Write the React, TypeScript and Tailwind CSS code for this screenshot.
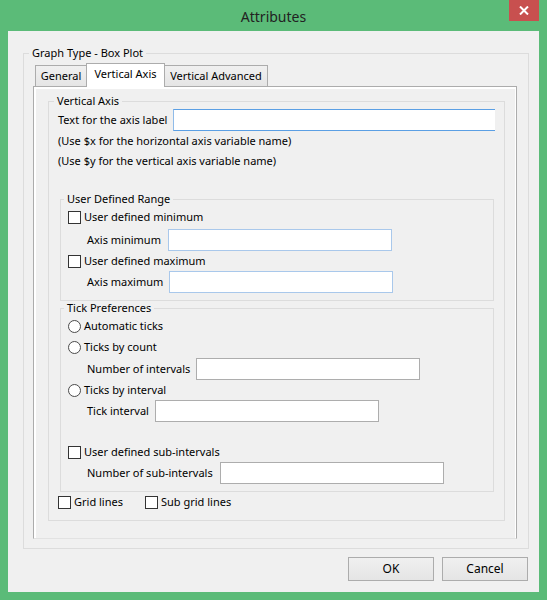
import React from 'react';

// Win8-style "Attributes" dialog, Vertical Axis tab
const font = "font-['Segoe_UI','Noto_Sans',sans-serif]";

function CheckBox({ label }: { label: string }) {
  return (
    <div className="flex items-center">
      <span className="w-[13px] h-[13px] border border-[#333] bg-white shrink-0" />
      <span className="ml-[3px]">{label}</span>
    </div>
  );
}

function Radio({ label }: { label: string }) {
  return (
    <div className="flex items-center">
      <span className="w-[13px] h-[13px] rounded-full border border-[#4a4a4a] bg-white shrink-0" />
      <span className="ml-[3px]">{label}</span>
    </div>
  );
}

function Field({ label, labelWidth, border }: { label: string; labelWidth: string; border: string }) {
  return (
    <div className="flex items-center h-[22px] pl-[19px]">
      <span className={labelWidth}>{label}</span>
      <div className={`w-[224px] h-[22px] bg-white border ${border}`} />
    </div>
  );
}

export default function App() {
  return (
    <div className={`w-[547px] h-[600px] bg-[#5bbb78] flex flex-col text-[11px] text-black ${font}`}>
      {/* title bar */}
      <div className="relative h-[31px] flex items-center justify-center">
        <span className="text-[14px] text-[#222] mt-[1px]">Attributes</span>
        <div className="absolute top-0 right-[8px] w-[30px] h-[21px] bg-[#c8504f] flex items-center justify-center">
          <svg width="10" height="9" viewBox="0 0 10 9">
            <path d="M1 0.5 L9 8.5 M9 0.5 L1 8.5" stroke="#fff" strokeWidth="2" />
          </svg>
        </div>
      </div>

      {/* client area */}
      <div className="mx-[8px] h-[561px] bg-[#f0f0f0] flex flex-col">
        <fieldset className="ml-[15px] mt-[14px] w-[506px] border border-[#dcdcdc] pl-[9px] pr-[11px] pb-[9px]">
          <legend className="leading-[16px] px-[3px] -ml-[4px]">Graph Type - Box Plot</legend>

          {/* tabs */}
          <div className="mt-[2px] h-[23px] flex items-end">
            <div className="ml-[2px] w-[52px] h-[21px] border border-b-0 border-[#acacac] bg-gradient-to-b from-[#f0f0f0] to-[#e5e5e5] flex items-center justify-center pt-[1px]">
              General
            </div>
            <div className="relative z-10 -ml-[1px] w-[79px] h-[24px] -mb-[1px] border border-b-0 border-[#acacac] bg-white flex items-center justify-center pb-[2px]">
              Vertical Axis
            </div>
            <div className="-ml-[1px] w-[104px] h-[21px] border border-b-0 border-[#acacac] bg-gradient-to-b from-[#f0f0f0] to-[#e5e5e5] flex items-center justify-center pt-[1px]">
              Vertical Advanced
            </div>
          </div>

          {/* tab page */}
          <div className="w-[484px] h-[453px] border border-[#acacac] border-b-[#e2e2e2] bg-white pl-[2px] pt-[2px] pr-[1px] flex flex-col">
            <div className="flex-1 bg-[#f0f0f0] pt-[4px]">
              <fieldset className="ml-[12px] w-[456px] border border-[#dcdcdc] pl-[9px] pr-[9px] pb-[8px]">
                <legend className="leading-[16px] px-[3px] -ml-[4px]">Vertical Axis</legend>

                <div className="flex items-center h-[22px]">
                  <span className="w-[115px]">Text for the axis label</span>
                  <div className="w-[322px] h-[22px] shrink-0 bg-white border border-[#5b9fe4] border-l-[#8fbbe9] border-r-0" />
                </div>
                <div className="h-[20px] flex items-center">(Use $x for the horizontal axis variable name)</div>
                <div className="h-[20px] flex items-center">(Use $y for the vertical axis variable name)</div>

                <fieldset className="mt-[20px] ml-[2px] w-[434px] border border-[#dcdcdc] pl-[7px] pb-[7px]">
                  <legend className="leading-[16px] px-[3px] -ml-[4px]">User Defined Range</legend>
                  <div className="h-[21px] flex items-center">
                    <CheckBox label="User defined minimum" />
                  </div>
                  <div className="h-[23px] pt-[1px]">
                    <Field label="Axis minimum" labelWidth="w-[81px]" border="border-[#a9c8eb]" />
                  </div>
                  <div className="h-[20px] flex items-center">
                    <CheckBox label="User defined maximum" />
                  </div>
                  <Field label="Axis maximum" labelWidth="w-[82px]" border="border-[#a9c8eb]" />
                </fieldset>

                <fieldset className="-mt-[1px] ml-[2px] w-[434px] border border-[#dcdcdc] pl-[7px] pb-[7px]">
                  <legend className="leading-[16px] px-[3px] -ml-[4px]">Tick Preferences</legend>
                  <div className="h-[21px] flex items-center">
                    <Radio label="Automatic ticks" />
                  </div>
                  <div className="h-[21px] flex items-center">
                    <Radio label="Ticks by count" />
                  </div>
                  <Field label="Number of intervals" labelWidth="w-[109px]" border="border-[#adadad]" />
                  <div className="h-[20px] flex items-center">
                    <Radio label="Ticks by interval" />
                  </div>
                  <Field label="Tick interval" labelWidth="w-[68px]" border="border-[#adadad]" />
                  <div className="mt-[20px] h-[20px] flex items-center">
                    <CheckBox label="User defined sub-intervals" />
                  </div>
                  <Field label="Number of sub-intervals" labelWidth="w-[133px]" border="border-[#adadad]" />
                </fieldset>

                <div className="h-[20px] flex items-center">
                  <div className="w-[87px]">
                    <CheckBox label="Grid lines" />
                  </div>
                  <CheckBox label="Sub grid lines" />
                </div>
              </fieldset>
            </div>
          </div>
        </fieldset>

        {/* buttons */}
        <div className="mt-[8px] mr-[11px] flex justify-end gap-[8px]">
          <button className="w-[86px] h-[24px] border border-[#acacac] bg-gradient-to-b from-[#f0f0f0] to-[#e5e5e5] text-[12px]">
            OK
          </button>
          <button className="w-[86px] h-[24px] border border-[#acacac] bg-gradient-to-b from-[#f0f0f0] to-[#e5e5e5] text-[12px]">
            Cancel
          </button>
        </div>
      </div>
    </div>
  );
}
